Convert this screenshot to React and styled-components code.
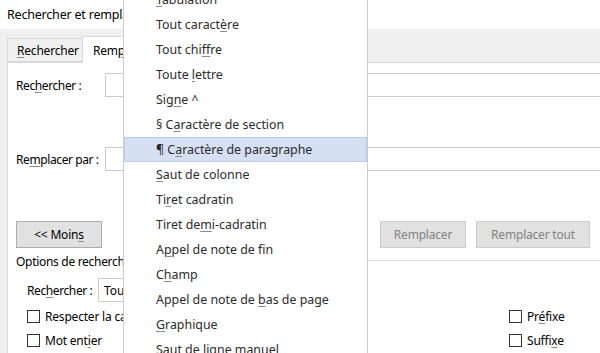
import React from 'react';
import styled, { createGlobalStyle } from 'styled-components';

const GlobalStyle = createGlobalStyle`
  html, body {
    margin: 0;
    padding: 0;
    background: #fff;
  }
  body {
    font-family: "Noto Sans", "Open Sans", sans-serif;
    font-size: 12px;
    color: #000;
  }
`;

const Window = styled.div`
  position: relative;
  width: 600px;
  height: 353px;
  overflow: hidden;
  background: #f0f0f0;
  display: flex;
  flex-direction: column;
`;

const TitleBar = styled.div`
  flex: none;
  height: 29px;
  padding-left: 7px;
  background: #fff;
  display: flex;
  align-items: center;
  font-size: 12.5px;
  letter-spacing: -0.2px;
`;

const TabStrip = styled.div`
  flex: none;
  height: 33px;
  padding-left: 7px;
  display: flex;
  align-items: flex-end;
`;

const Tab = styled.div`
  box-sizing: border-box;
  height: ${p => (p.active ? '27px' : '24px')};
  width: ${p => (p.active ? '100px' : '75px')};
  margin-bottom: ${p => (p.active ? '-1px' : '0')};
  padding-left: ${p => (p.active ? '10px' : '9px')};
  display: flex;
  align-items: center;
  background: ${p => (p.active ? '#fff' : '#f0f0f0')};
  border: 1px solid #d9d9d9;
  border-bottom: ${p => (p.active ? 'none' : '1px solid #d9d9d9')};
  border-right: ${p => (p.active ? '1px solid #d9d9d9' : 'none')};
  position: relative;
  z-index: ${p => (p.active ? 1 : 0)};
  letter-spacing: -0.2px;
`;

const Panel = styled.div`
  flex: 1;
  width: 680px;
  margin-left: 7px;
  box-sizing: border-box;
  background: #fff;
  border-top: 1px solid #d9d9d9;
  border-left: 1px solid #d9d9d9;
  padding: 10px 0 0 8px;
  display: flex;
  flex-direction: column;
`;

const FieldRow = styled.div`
  display: flex;
  align-items: center;
  height: 24px;
  margin-top: ${p => p.gap || 0}px;
`;

const Label = styled.div`
  width: ${p => p.w}px;
  flex: none;
  letter-spacing: -0.4px;
`;

const TextBox = styled.div`
  flex: 1;
  height: 24px;
  box-sizing: border-box;
  border: 1px solid #cbcbcb;
  background: #fff;
`;

const ButtonRow = styled.div`
  display: flex;
  margin-top: 50px;
  height: 27px;
`;

const ButtonGroup = styled.div`
  display: flex;
  gap: 10px;
  margin-left: 278px;
`;

const Button = styled.div`
  box-sizing: border-box;
  width: ${p => p.w}px;
  height: 27px;
  flex: none;
  display: flex;
  align-items: center;
  justify-content: center;
  background: #e1e1e1;
  border: 1px solid ${p => (p.disabled ? '#cccccc' : '#adadad')};
  color: ${p => (p.disabled ? '#838383' : '#000')};
  letter-spacing: -0.2px;
`;

const OptionsHeader = styled.div`
  display: flex;
  align-items: flex-start;
  height: 16px;
  margin-top: 6px;
  line-height: 16px;
  letter-spacing: -0.3px;
`;

const Rule = styled.div`
  flex: 1;
  height: 1px;
  margin: 6px 0 0 6px;
  background: #dcdcdc;
`;

const SearchRow = styled.div`
  display: flex;
  align-items: center;
  height: 24px;
  margin-top: 8px;
  padding-left: 11px;
`;

const SelectBox = styled.div`
  width: 220px;
  height: 24px;
  box-sizing: border-box;
  border: 1px solid #cbcbcb;
  padding-left: 5px;
  display: flex;
  align-items: center;
`;

const CheckGrid = styled.div`
  display: grid;
  grid-template-columns: 482px auto;
  grid-auto-rows: 24px;
  margin-top: 2px;
  padding-left: 11px;
`;

const CheckItem = styled.label`
  display: flex;
  align-items: center;
  gap: 5px;
  letter-spacing: -0.2px;
`;

const Box = styled.span`
  width: 13px;
  height: 13px;
  box-sizing: border-box;
  border: 1px solid #333;
  background: #fff;
  flex: none;
`;

const Menu = styled.div`
  position: absolute;
  left: 123px;
  top: -16px;
  width: 245px;
  box-sizing: border-box;
  padding: 2px 0;
  background: #fff;
  border: 1px solid #cccccc;
  z-index: 5;
`;

const MenuItem = styled.div`
  height: 25px;
  line-height: 25px;
  padding-left: 32px;
  font-size: 12.4px;
  color: #2b2b2b;
  white-space: nowrap;
  background: ${p => (p.active ? '#d5e1f3' : 'transparent')};
  box-shadow: ${p => (p.active ? 'inset 0 0 0 1px #b9cdec' : 'none')};
`;

const U = styled.span`
  text-decoration: underline;
  text-underline-offset: 2px;
  text-decoration-thickness: 1px;
  text-decoration-color: #8a8a8a;
`;

const mk = (before, key, after) => (
  <span>
    {before}
    <U>{key}</U>
    {after}
  </span>
);

const menuItems = [
  { label: mk('', 'T', 'abulation') },
  { label: mk('Tout caract', 'è', 're') },
  { label: mk('Tout chi', 'f', 'fre') },
  { label: mk('Toute ', 'l', 'ettre') },
  { label: mk('Sig', 'n', 'e ^') },
  { label: mk('§ C', 'a', 'ractère de section') },
  { label: mk('¶ C', 'a', 'ractère de paragraphe'), active: true },
  { label: mk('', 'S', 'aut de colonne') },
  { label: mk('Ti', 'r', 'et cadratin') },
  { label: mk('Tiret de', 'm', 'i-cadratin') },
  { label: mk('A', 'p', 'pel de note de fin') },
  { label: mk('C', 'h', 'amp') },
  { label: mk('Appel de note de ', 'b', 'as de page') },
  { label: mk('', 'G', 'raphique') },
  { label: mk('Saut de li', 'g', 'ne manuel') },
];

export default function App() {
  return (
    <>
      <GlobalStyle />
      <Window>
        <TitleBar>Rechercher et remplacer</TitleBar>
        <TabStrip>
          <Tab>{mk('', 'R', 'echercher')}</Tab>
          <Tab active>{mk('Rem', 'p', 'lacer')}</Tab>
        </TabStrip>
        <Panel>
          <FieldRow>
            <Label w={89}>{mk('Rec', 'h', 'ercher :')}</Label>
            <TextBox />
          </FieldRow>
          <FieldRow gap={50}>
            <Label w={89}>{mk('Re', 'm', 'placer par :')}</Label>
            <TextBox />
          </FieldRow>
          <ButtonRow>
            <Button w={86}>{mk('<< Moin', 's', '')}</Button>
            <ButtonGroup>
              <Button w={86} disabled>Remplacer</Button>
              <Button w={114} disabled>Remplacer tout</Button>
              <Button w={86} disabled>Suivant</Button>
            </ButtonGroup>
          </ButtonRow>
          <OptionsHeader>
            Options de recherche
            <Rule />
          </OptionsHeader>
          <SearchRow>
            <Label w={71}>{mk('Rec', 'h', 'ercher :')}</Label>
            <SelectBox>Tous</SelectBox>
          </SearchRow>
          <CheckGrid>
            <CheckItem><Box />{mk('Respecter la ca', 's', 'se')}</CheckItem>
            <CheckItem><Box />{mk('Pr', 'é', 'fixe')}</CheckItem>
            <CheckItem><Box />{mk('Mot ent', 'i', 'er')}</CheckItem>
            <CheckItem><Box />{mk('Suffi', 'x', 'e')}</CheckItem>
          </CheckGrid>
        </Panel>
        <Menu>
          {menuItems.map((item, i) => (
            <MenuItem key={i} active={item.active}>{item.label}</MenuItem>
          ))}
        </Menu>
      </Window>
    </>
  );
}
